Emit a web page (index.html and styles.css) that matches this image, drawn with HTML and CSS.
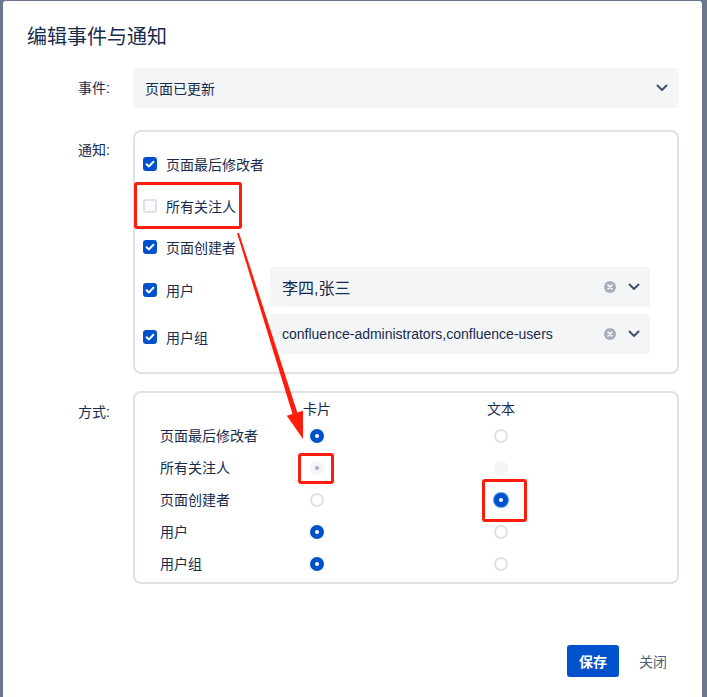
FILE: index.html
```html
<!DOCTYPE html>
<html lang="zh">
<head>
<meta charset="utf-8">
<title>编辑事件与通知</title>
<link rel="stylesheet" href="styles.css">
</head>
<body>
<div class="dialog">
  <h1 class="title">编辑事件与通知</h1>
  <div class="form">
    <div class="label label-event">事件:</div>
    <div class="select">
      <span>页面已更新</span>
      <svg class="chev" viewBox="0 0 12 8" width="12" height="8"><path d="M1.5 1.5 L6 6 L10.5 1.5" fill="none" stroke="#42526e" stroke-width="2" stroke-linecap="round" stroke-linejoin="round"/></svg>
    </div>

    <div class="label label-box">通知:</div>
    <div class="box notify">
      <div class="nrow"><span class="cb on"><svg viewBox="0 0 14 14" width="14" height="14"><path d="M3.6 7.2 L6 9.4 L10.4 4.8" fill="none" stroke="#fff" stroke-width="2" stroke-linecap="round" stroke-linejoin="round"/></svg></span><span>页面最后修改者</span></div>
      <div class="nrow"><span class="cb off"></span><span>所有关注人</span></div>
      <div class="nrow short"><span class="cb on"><svg viewBox="0 0 14 14" width="14" height="14"><path d="M3.6 7.2 L6 9.4 L10.4 4.8" fill="none" stroke="#fff" stroke-width="2" stroke-linecap="round" stroke-linejoin="round"/></svg></span><span>页面创建者</span></div>
      <div class="frow">
        <div class="flabel"><span class="cb on"><svg viewBox="0 0 14 14" width="14" height="14"><path d="M3.6 7.2 L6 9.4 L10.4 4.8" fill="none" stroke="#fff" stroke-width="2" stroke-linecap="round" stroke-linejoin="round"/></svg></span><span>用户</span></div>
        <div class="field">
          <span class="fval big">李四,张三</span>
          <svg class="clear" viewBox="0 0 12 12" width="12" height="12"><circle cx="6" cy="6" r="6" fill="#a5adba"/><path d="M4 4 L8 8 M8 4 L4 8" stroke="#fff" stroke-width="1.6" stroke-linecap="round"/></svg>
          <svg class="chev" viewBox="0 0 12 8" width="12" height="8"><path d="M1.5 1.5 L6 6 L10.5 1.5" fill="none" stroke="#42526e" stroke-width="2" stroke-linecap="round" stroke-linejoin="round"/></svg>
        </div>
      </div>
      <div class="frow second">
        <div class="flabel"><span class="cb on"><svg viewBox="0 0 14 14" width="14" height="14"><path d="M3.6 7.2 L6 9.4 L10.4 4.8" fill="none" stroke="#fff" stroke-width="2" stroke-linecap="round" stroke-linejoin="round"/></svg></span><span>用户组</span></div>
        <div class="field">
          <span class="fval latin">confluence-administrators,confluence-users</span>
          <svg class="clear" viewBox="0 0 12 12" width="12" height="12"><circle cx="6" cy="6" r="6" fill="#a5adba"/><path d="M4 4 L8 8 M8 4 L4 8" stroke="#fff" stroke-width="1.6" stroke-linecap="round"/></svg>
          <svg class="chev" viewBox="0 0 12 8" width="12" height="8"><path d="M1.5 1.5 L6 6 L10.5 1.5" fill="none" stroke="#42526e" stroke-width="2" stroke-linecap="round" stroke-linejoin="round"/></svg>
        </div>
      </div>
    </div>

    <div class="label label-box2">方式:</div>
    <div class="box method">
      <div class="mh"></div><div class="mh c">卡片</div><div class="mh c">文本</div>
      <div class="ml">页面最后修改者</div><div class="mc"><span class="rd on"></span></div><div class="mc"><span class="rd off"></span></div>
      <div class="ml">所有关注人</div><div class="mc"><span class="rd dis-on"></span></div><div class="mc"><span class="rd dis"></span></div>
      <div class="ml">页面创建者</div><div class="mc"><span class="rd off"></span></div><div class="mc"><span class="rd on focus"></span></div>
      <div class="ml">用户</div><div class="mc"><span class="rd on"></span></div><div class="mc"><span class="rd off"></span></div>
      <div class="ml">用户组</div><div class="mc"><span class="rd on"></span></div><div class="mc"><span class="rd off"></span></div>
    </div>
  </div>
  <div class="footer">
    <button class="btn primary">保存</button>
    <button class="btn link">关闭</button>
  </div>
</div>

<div class="annot a1"></div>
<div class="annot a2"></div>
<div class="annot a3"></div>
<svg class="arrow" viewBox="0 0 707 697" width="707" height="697">
  <polygon points="237.05,233.3 292.5,414.0 286.8,415.8 303,439 303.0,410.7 297.3,412.5 238.95,232.7" fill="#ff1c0c"/>
</svg>
</body>
</html>
```

FILE: styles.css
```css
html, body {
  margin: 0;
  padding: 0;
}
body {
  background: #6b778c;
  width: 707px;
  height: 697px;
  overflow: hidden;
  position: relative;
  font-family: "Liberation Sans", "Noto Sans CJK SC", sans-serif;
  color: #172b4d;
  font-size: 14px;
}
.dialog {
  margin: 1px 0 0 3px;
  width: 699px;
  height: 720px;
  background: #fff;
  border-radius: 3px;
  box-sizing: border-box;
}
.title {
  margin: 0;
  padding: 21px 24px 0;
  font-size: 20px;
  line-height: 28px;
  font-weight: 400;
  color: #172b4d;
  font-family: "Noto Sans CJK SC", sans-serif;
}
.form {
  display: grid;
  grid-template-columns: 106px 1fr;
  padding: 18px 23px 0 24px;
  align-items: start;
}
.label {
  text-align: right;
  padding-right: 23px;
  line-height: 20px;
  color: #172b4d;
}
.label-event { margin-top: 10px; }
.label-box { margin-top: 32px; }
.label-box2 { margin-top: 28px; }
.select {
  height: 40px;
  background: #f4f5f7;
  border-radius: 3px;
  display: flex;
  align-items: center;
  justify-content: space-between;
  padding: 0 11px 0 12px;
  box-sizing: border-box;
}
.chev { display: block; }
.box {
  border: 2px solid #dfe1e6;
  border-radius: 8px;
}
.notify {
  margin-top: 22px;
  padding: 11px 27px 18px 8px;
}
.nrow {
  height: 42px;
  display: flex;
  align-items: center;
  gap: 9px;
}
.nrow.short { height: 40px; }
.cb {
  width: 14px;
  height: 14px;
  border-radius: 3px;
  box-sizing: border-box;
  flex: none;
  display: block;
}
.cb svg { display: block; }
.cb.on { background: #0052cc; }
.cb.off { background: #fafbfc; border: 2px solid #dfe1e6; }
.frow {
  display: flex;
  align-items: center;
  height: 40px;
}
.frow.second { margin-top: 7px; }
.flabel {
  width: 127px;
  display: flex;
  align-items: center;
  gap: 9px;
  margin-top: 6px;
  flex: none;
}
.field {
  flex: 1;
  height: 40px;
  background: #f4f5f7;
  border-radius: 3px;
  display: flex;
  align-items: center;
  padding: 0 10px 0 12px;
  box-sizing: border-box;
}
.fval { flex: 1; white-space: nowrap; }
.fval.big { font-size: 16px; }
.clear { display: block; margin-right: 12px; }
.method {
  margin-top: 17px;
  display: grid;
  grid-template-columns: 110px 94px 274px;
  grid-template-rows: 24px repeat(5, 32px);
  padding: 3px 0 2px 25px;
  align-items: center;
}
.mh.c { text-align: center; }
.mc { display: flex; justify-content: center; align-items: center; }
.ml { line-height: 20px; }
.rd {
  width: 14px;
  height: 14px;
  border-radius: 50%;
  box-sizing: border-box;
  display: block;
  position: relative;
}
.rd.on { background: #0052cc; }
.rd.on::after {
  content: "";
  position: absolute;
  left: 5px; top: 5px;
  width: 4px; height: 4px;
  border-radius: 50%;
  background: #fff;
}
.rd.focus { box-shadow: 0 0 0 1px #4c9aff; }
.rd.off { background: #fff; border: 2px solid #dfe1e6; }
.rd.dis { background: #f4f5f7; }
.rd.dis-on { background: #f4f5f7; }
.rd.dis-on::after {
  content: "";
  position: absolute;
  left: 5px; top: 5px;
  width: 4px; height: 4px;
  border-radius: 50%;
  background: #a5adba;
}
.footer {
  display: flex;
  justify-content: flex-end;
  gap: 8px;
  margin-top: 61px;
  padding-right: 23px;
}
.btn {
  height: 32px;
  padding: 0 12px;
  border: 0;
  border-radius: 3px;
  font-family: "Noto Sans CJK SC", sans-serif;
  font-size: 14px;
  cursor: pointer;
}
.btn.primary { background: #0052cc; color: #fff; font-weight: 700; }
.btn.link { background: transparent; color: #505f79; }
.annot {
  position: absolute;
  border: 3px solid #ff1c0c;
  border-radius: 3px;
  box-sizing: border-box;
}
.a1 { left: 134px; top: 182px; width: 108px; height: 47px; }
.a2 { left: 298px; top: 453px; width: 36px; height: 31px; }
.a3 { left: 482px; top: 479px; width: 45px; height: 43px; }
.arrow {
  position: absolute;
  left: 0;
  top: 0;
  pointer-events: none;
}
```
